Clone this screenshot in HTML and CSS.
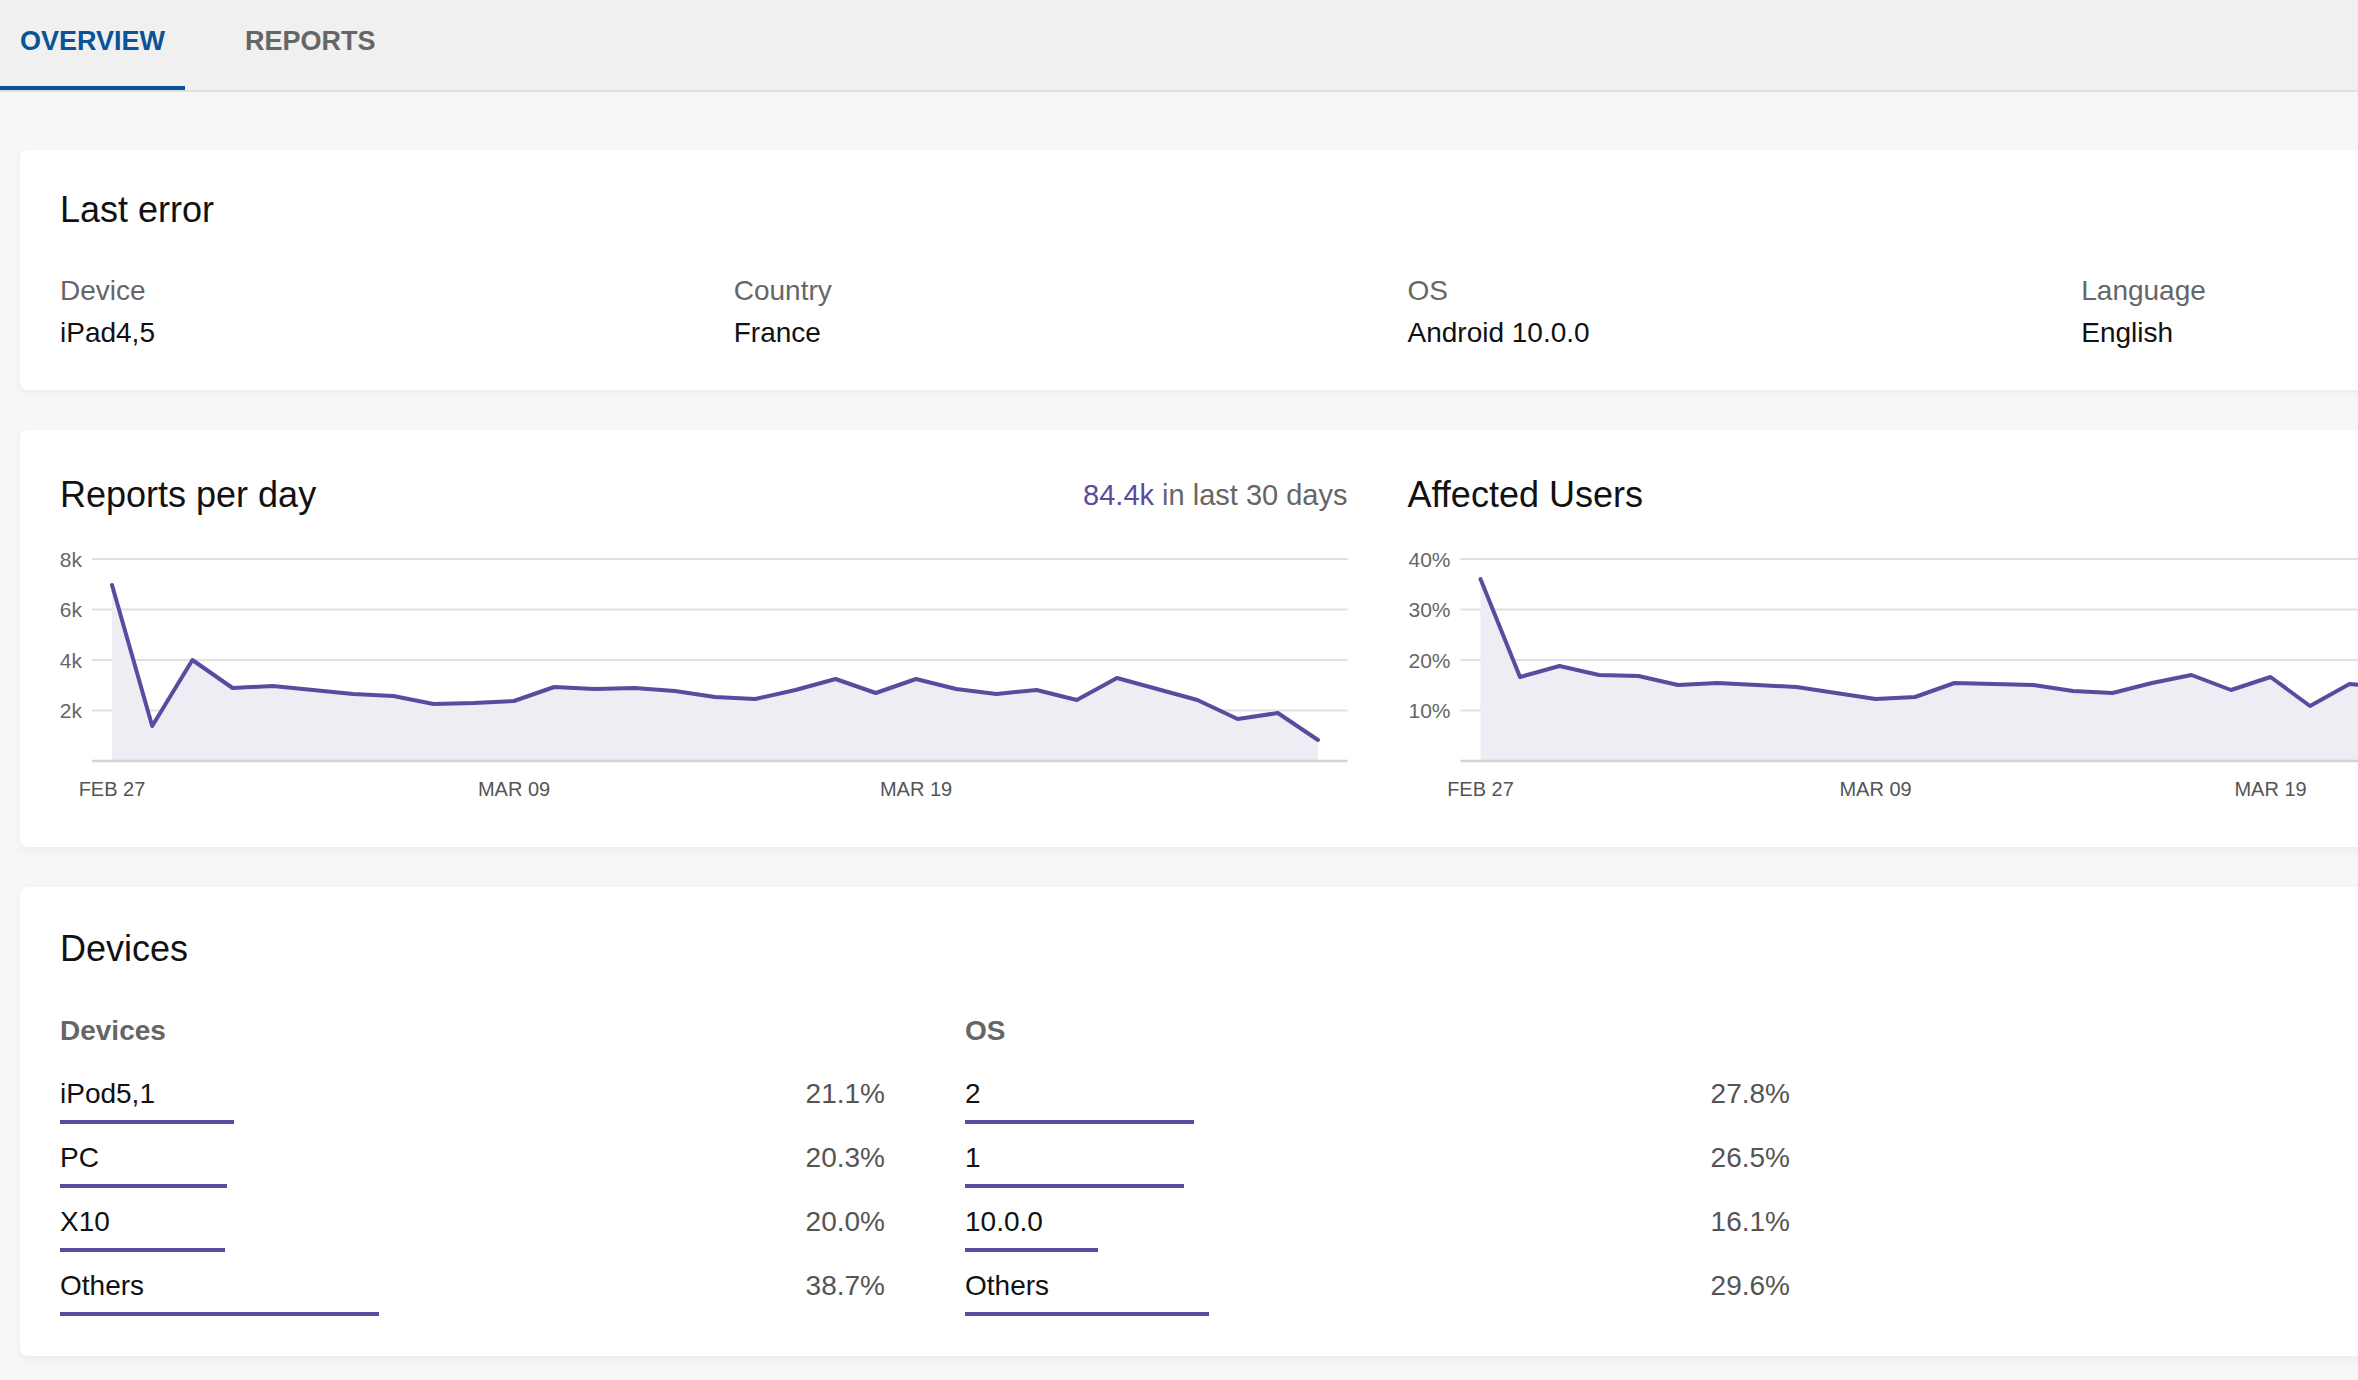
FILE: index.html
```html
<!DOCTYPE html>
<html lang="en">
<head>
<meta charset="utf-8">
<title>Overview</title>
<link rel="stylesheet" href="styles.css">
</head>
<body>
<div class="page">
  <nav class="tabs">
    <div class="tab active">OVERVIEW</div>
    <div class="tab">REPORTS</div>
  </nav>
  <main class="main">
    <section class="card card-error">
      <h2 class="card-title">Last error</h2>
      <div class="facts">
        <div class="fact"><div class="fact-label">Device</div><div class="fact-value">iPad4,5</div></div>
        <div class="fact"><div class="fact-label">Country</div><div class="fact-value">France</div></div>
        <div class="fact"><div class="fact-label">OS</div><div class="fact-value">Android 10.0.0</div></div>
        <div class="fact"><div class="fact-label">Language</div><div class="fact-value">English</div></div>
      </div>
    </section>

    <section class="card card-charts">
      <div class="charts">
        <div class="chart-col">
          <div class="chart-head">
            <h2 class="card-title">Reports per day</h2>
            <div class="chart-sub"><span class="accent">84.4k</span> in last 30 days</div>
          </div>
          <svg class="chart" viewBox="0 0 1287.5 268" preserveAspectRatio="none">
            <g class="grid">
              <line x1="32" y1="17" x2="1287.5" y2="17"/>
              <line x1="32" y1="67.5" x2="1287.5" y2="67.5"/>
              <line x1="32" y1="118" x2="1287.5" y2="118"/>
              <line x1="32" y1="168.5" x2="1287.5" y2="168.5"/>
            </g>
            <polygon class="area" points="52,219 52,43 92.2,184 132.4,118 172.6,146 212.8,144 253,148 293.2,152 333.4,154 373.6,162 413.8,161 454,159 494.2,145 534.4,147 574.6,146 614.8,149 655,155 695.2,157 735.4,148 775.6,137 815.8,151 856,137 896.2,147 936.4,152 976.6,148 1016.8,158 1057,136 1097.2,147 1137.4,158 1177.6,177 1217.8,171 1258,198 1258,219"/>
            <line class="axis" x1="32" y1="219" x2="1287.5" y2="219"/>
            <polyline class="line" points="52,43 92.2,184 132.4,118 172.6,146 212.8,144 253,148 293.2,152 333.4,154 373.6,162 413.8,161 454,159 494.2,145 534.4,147 574.6,146 614.8,149 655,155 695.2,157 735.4,148 775.6,137 815.8,151 856,137 896.2,147 936.4,152 976.6,148 1016.8,158 1057,136 1097.2,147 1137.4,158 1177.6,177 1217.8,171 1258,198"/>
            <g class="ylab">
              <text x="22" y="24.5">8k</text>
              <text x="22" y="75">6k</text>
              <text x="22" y="125.5">4k</text>
              <text x="22" y="176">2k</text>
            </g>
            <g class="xlab">
              <text x="52" y="254">FEB 27</text>
              <text x="454" y="254">MAR 09</text>
              <text x="856" y="254">MAR 19</text>
            </g>
          </svg>
        </div>
        <div class="chart-col">
          <div class="chart-head">
            <h2 class="card-title">Affected Users</h2>
          </div>
          <svg class="chart" viewBox="0 0 1287.5 268" preserveAspectRatio="none">
            <g class="grid">
              <line x1="52.5" y1="17" x2="1287.5" y2="17"/>
              <line x1="52.5" y1="67.5" x2="1287.5" y2="67.5"/>
              <line x1="52.5" y1="118" x2="1287.5" y2="118"/>
              <line x1="52.5" y1="168.5" x2="1287.5" y2="168.5"/>
            </g>
            <polygon class="area" points="72.5,219 72.5,37 112,135 151.5,124 191,133 230.5,134 270,143 309.5,141 349,143 388.5,145 428,151 467.5,157 507,155 546.5,141 586,142 625.5,143 665,149 704.5,151 744,141 783.5,133 823,148 862.5,135 902,164 941.5,142 981,145 1020.5,150 1060,139 1099.5,144 1139,160 1178.5,148 1218,152 1257.5,165 1257.5,219"/>
            <line class="axis" x1="52.5" y1="219" x2="1287.5" y2="219"/>
            <polyline class="line" points="72.5,37 112,135 151.5,124 191,133 230.5,134 270,143 309.5,141 349,143 388.5,145 428,151 467.5,157 507,155 546.5,141 586,142 625.5,143 665,149 704.5,151 744,141 783.5,133 823,148 862.5,135 902,164 941.5,142 981,145 1020.5,150 1060,139 1099.5,144 1139,160 1178.5,148 1218,152 1257.5,165"/>
            <g class="ylab">
              <text x="42.5" y="24.5">40%</text>
              <text x="42.5" y="75">30%</text>
              <text x="42.5" y="125.5">20%</text>
              <text x="42.5" y="176">10%</text>
            </g>
            <g class="xlab">
              <text x="72.5" y="254">FEB 27</text>
              <text x="467.5" y="254">MAR 09</text>
              <text x="862.5" y="254">MAR 19</text>
            </g>
          </svg>
        </div>
      </div>
    </section>

    <section class="card">
      <h2 class="card-title">Devices</h2>
      <div class="breakdowns">
        <div class="breakdown">
          <h3 class="breakdown-title">Devices</h3>
          <div class="rows">
            <div class="row"><div class="row-line"><span class="row-name">iPod5,1</span><span class="row-pct">21.1%</span></div><div class="bar" style="width:21.1%"></div></div>
            <div class="row"><div class="row-line"><span class="row-name">PC</span><span class="row-pct">20.3%</span></div><div class="bar" style="width:20.3%"></div></div>
            <div class="row"><div class="row-line"><span class="row-name">X10</span><span class="row-pct">20.0%</span></div><div class="bar" style="width:20.0%"></div></div>
            <div class="row"><div class="row-line"><span class="row-name">Others</span><span class="row-pct">38.7%</span></div><div class="bar" style="width:38.7%"></div></div>
          </div>
        </div>
        <div class="breakdown">
          <h3 class="breakdown-title">OS</h3>
          <div class="rows">
            <div class="row"><div class="row-line"><span class="row-name">2</span><span class="row-pct">27.8%</span></div><div class="bar" style="width:27.8%"></div></div>
            <div class="row"><div class="row-line"><span class="row-name">1</span><span class="row-pct">26.5%</span></div><div class="bar" style="width:26.5%"></div></div>
            <div class="row"><div class="row-line"><span class="row-name">10.0.0</span><span class="row-pct">16.1%</span></div><div class="bar" style="width:16.1%"></div></div>
            <div class="row"><div class="row-line"><span class="row-name">Others</span><span class="row-pct">29.6%</span></div><div class="bar" style="width:29.6%"></div></div>
          </div>
        </div>
        <div class="breakdown"></div>
      </div>
    </section>
  </main>
</div>
</body>
</html>
```

FILE: styles.css
```css
html, body {
  margin: 0;
  padding: 0;
  overflow: hidden;
  background: #f7f7f7;
}

body {
  font-family: "Liberation Sans", Arial, sans-serif;
  color: #111;
}

.page {
  width: 2755px;
  min-height: 1380px;
  background: #f7f7f7;
}

.tabs {
  display: flex;
  gap: 40px;
  height: 90px;
  background: #f0f0f0;
  border-bottom: 2px solid #e0e0e0;
}

.tab {
  box-sizing: border-box;
  height: 90px;
  padding: 0 20px 4px;
  display: flex;
  align-items: center;
  font-size: 27px;
  font-weight: bold;
  color: #666;
  border-bottom: 4px solid transparent;
}

.tab.active {
  color: #0a5396;
  border-bottom-color: #0a5396;
}

.main {
  padding: 58px 20px 40px;
  display: flex;
  flex-direction: column;
  gap: 40px;
}

.card {
  background: #fff;
  border-radius: 8px;
  padding: 40px;
  box-shadow: 0 3px 10px rgba(0, 0, 0, 0.05);
}

.card-error {
  padding-top: 38px;
}

.card-title {
  margin: 0;
  font-size: 36px;
  font-weight: normal;
  line-height: 1.2;
  color: #111;
}

.facts {
  margin-top: 43px;
  display: grid;
  grid-template-columns: repeat(4, 1fr);
  gap: 60px;
}

.fact-label {
  font-size: 28px;
  line-height: 34px;
  color: #666;
}

.fact-value {
  margin-top: 8px;
  font-size: 28px;
  line-height: 34px;
  color: #111;
}

.card-charts {
  padding: 43px 40px 37px;
}

.charts {
  display: grid;
  grid-template-columns: 1fr 1fr;
  gap: 60px;
}

.chart-head {
  display: flex;
  align-items: center;
  justify-content: space-between;
  margin-bottom: 26px;
}

.chart-sub {
  font-size: 29px;
  line-height: 36px;
  color: #666;
}

.accent {
  color: #5b4a9e;
}

.chart {
  display: block;
  width: 100%;
  height: 268px;
  overflow: visible;
}

.grid line {
  stroke: #e0e0e0;
  stroke-width: 2;
}

.axis {
  stroke: #d4d4d6;
  stroke-width: 2.5;
}

.area {
  fill: #eeedf4;
}

.line {
  fill: none;
  stroke: #5b4a9e;
  stroke-width: 4;
  stroke-linejoin: round;
  stroke-linecap: round;
}

.ylab text {
  font-family: "Liberation Sans", Arial, sans-serif;
  font-size: 21px;
  fill: #666;
  text-anchor: end;
}

.xlab text {
  font-family: "Liberation Sans", Arial, sans-serif;
  font-size: 20px;
  fill: #555;
  text-anchor: middle;
}

.breakdowns {
  margin-top: 43px;
  display: grid;
  grid-template-columns: repeat(3, 1fr);
  gap: 80px;
}

.breakdown-title {
  margin: 0;
  font-size: 28px;
  line-height: 34px;
  font-weight: bold;
  color: #666;
}

.rows {
  margin-top: 29px;
  display: flex;
  flex-direction: column;
  gap: 17px;
}

.row-line {
  display: flex;
  justify-content: space-between;
  font-size: 28px;
  line-height: 34px;
}

.row-name {
  color: #111;
}

.row-pct {
  color: #555;
}

.bar {
  margin-top: 9px;
  height: 4px;
  background: #5b4a9e;
}
```
